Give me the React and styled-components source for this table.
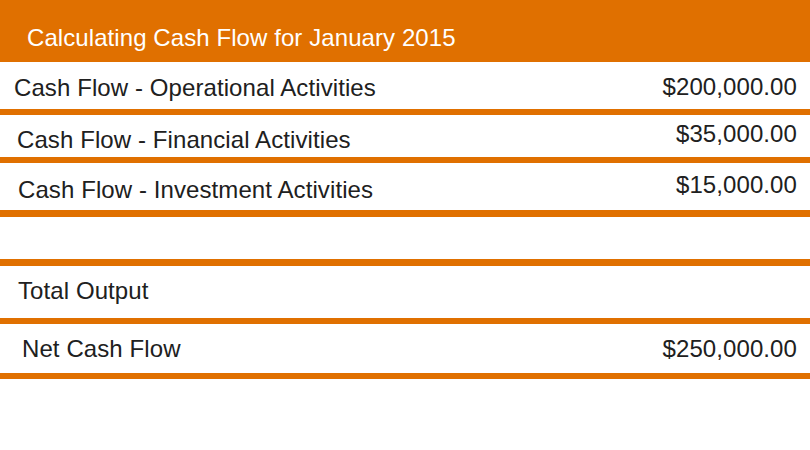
import React from "react";
import styled, { createGlobalStyle } from "styled-components";

const GlobalStyle = createGlobalStyle`
  html, body {
    margin: 0;
    padding: 0;
    background: #ffffff;
  }
  body {
    font-family: "Liberation Sans", Arial, sans-serif;
  }
`;

const ORANGE = "#e07000";

const Sheet = styled.div`
  width: 810px;
  height: 450px;
  background: #ffffff;
  display: flex;
  flex-direction: column;
  overflow: hidden;
`;

const Header = styled.div`
  height: 62px;
  background: ${ORANGE};
  padding: 24px 0 0 27px;
  box-sizing: border-box;
  color: #ffffff;
  font-size: 24px;
  line-height: 28px;
  letter-spacing: 0.08px;
`;

const Row = styled.div`
  height: ${(p) => p.$h}px;
  display: flex;
  justify-content: space-between;
  align-items: flex-start;
  padding: 0 13px 0 ${(p) => p.$indent}px;
  box-sizing: border-box;
  color: #202020;
  font-size: 24px;
  line-height: 28px;
  letter-spacing: 0.09px;
`;

const Label = styled.span`
  margin-top: ${(p) => p.$top}px;
  white-space: nowrap;
`;

const Amount = styled.span`
  margin-top: ${(p) => p.$top}px;
  white-space: nowrap;
`;

const Divider = styled.div`
  height: ${(p) => p.$size || 6}px;
  background: ${ORANGE};
  flex-shrink: 0;
`;

const Spacer = styled.div`
  height: ${(p) => p.$h}px;
`;

const rows = [
  { label: "Cash Flow - Operational Activities", amount: "$200,000.00", h: 47, indent: 14, lt: 12, at: 11, line: 6 },
  { label: "Cash Flow - Financial Activities", amount: "$35,000.00", h: 42, indent: 17, lt: 11, at: 5, line: 6 },
  { label: "Cash Flow - Investment Activities", amount: "$15,000.00", h: 47, indent: 18, lt: 13, at: 8, line: 7 },
];

export default function App() {
  return (
    <>
      <GlobalStyle />
      <Sheet>
        <Header>Calculating Cash Flow for January 2015</Header>
        {rows.map((r) => (
          <React.Fragment key={r.label}>
            <Row $h={r.h} $indent={r.indent}>
              <Label $top={r.lt}>{r.label}</Label>
              <Amount $top={r.at}>{r.amount}</Amount>
            </Row>
            <Divider $size={r.line} />
          </React.Fragment>
        ))}
        <Spacer $h={42} />
        <Divider $size={7} />
        <Row $h={52} $indent={18}>
          <Label $top={11}>Total Output</Label>
        </Row>
        <Divider $size={6} />
        <Row $h={49} $indent={22}>
          <Label $top={11}>Net Cash Flow</Label>
          <Amount $top={11}>$250,000.00</Amount>
        </Row>
        <Divider $size={6} />
      </Sheet>
    </>
  );
}
